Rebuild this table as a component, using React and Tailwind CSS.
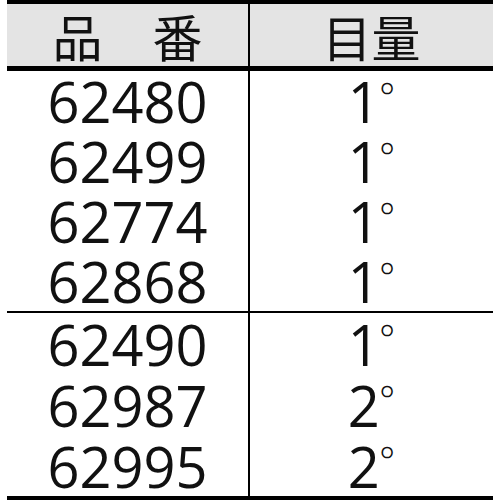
import React from "react";

const top = [
  ["62480", "1"],
  ["62499", "1"],
  ["62774", "1"],
  ["62868", "1"],
];
const bottom = [
  ["62490", "1"],
  ["62987", "2"],
  ["62995", "2"],
];

function Row({ a, b, h }) {
  return (
    <div className={`grid grid-cols-[241px_2px_243px] ${h}`}>
      <div className="flex items-center justify-center text-[56px] leading-[56px] text-[#111]">{a}</div>
      <div className="bg-black" />
      <div className="flex items-center justify-center text-[56px] leading-[56px] text-[#111]">
        <span>
          {b}
          <span className="ml-[-1px] text-[38px] font-light leading-none align-[0.32em]">°</span>
        </span>
      </div>
    </div>
  );
}

export default function App() {
  return (
    <div className="w-[500px] h-[500px] bg-white px-[7px] overflow-hidden" style={{ fontFamily: '"Open Sans", "Noto Sans CJK JP", sans-serif' }}>
      <div className="h-[4px] bg-black" />
      <div className="grid grid-cols-[241px_2px_243px] h-[62px] bg-[#e4e4e4]">
        <div className="flex items-center justify-center text-[50px] leading-none text-[#111]" style={{ fontFamily: '"Noto Sans CJK JP", sans-serif' }}>品　番</div>
        <div className="bg-black" />
        <div className="flex items-center justify-center text-[49px] leading-none text-[#111]" style={{ fontFamily: '"Noto Sans CJK JP", sans-serif' }}>目量</div>
      </div>
      <div className="h-[5px] bg-black" />
      {top.map(([a, b]) => (
        <Row key={a} a={a} b={b} h="h-[60px]" />
      ))}
      <div className="h-[2px] bg-black" />
      {bottom.map(([a, b]) => (
        <Row key={a} a={a} b={b} h="h-[61px]" />
      ))}
      <div className="h-[4px] bg-black" />
    </div>
  );
}
